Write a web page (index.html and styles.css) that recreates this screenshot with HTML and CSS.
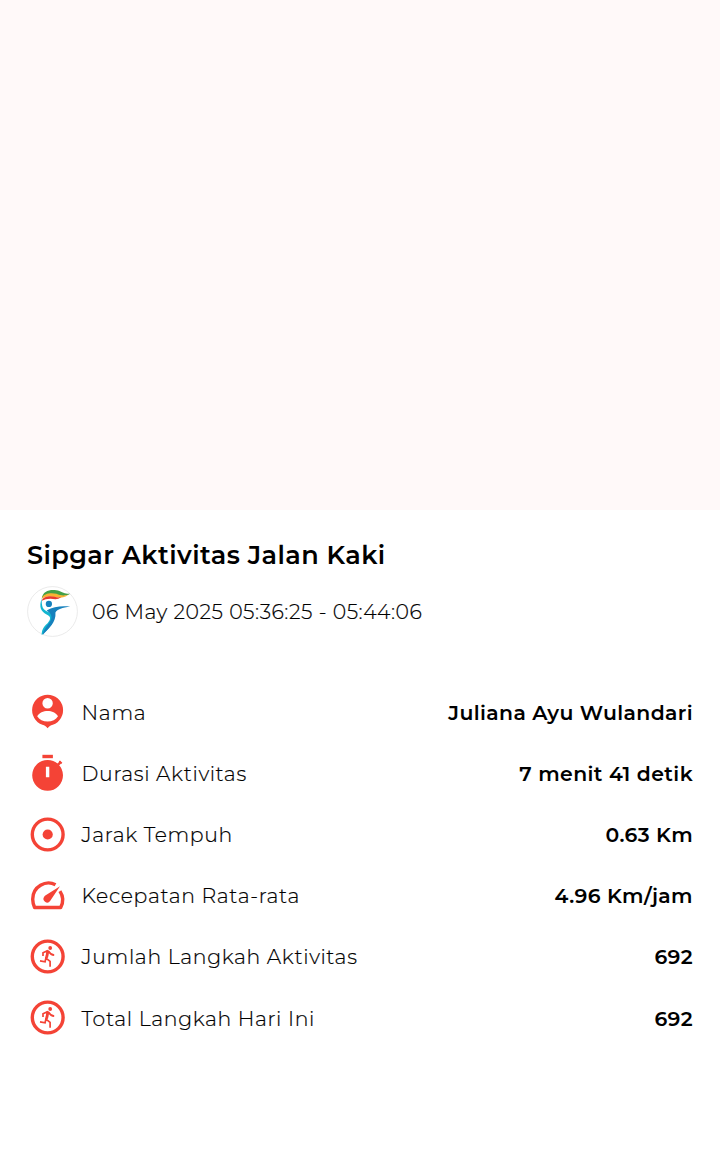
FILE: index.html
```html
<!DOCTYPE html>
<html lang="id">
<head>
<meta charset="utf-8">
<title>Sipgar Aktivitas Jalan Kaki</title>
<link rel="stylesheet" href="styles.css">
</head>
<body>
<div class="map"></div>
<main class="sheet">
  <h1 class="title">Sipgar Aktivitas Jalan Kaki</h1>
  <div class="meta">
    <svg class="avatar" viewBox="0 0 52 52">
      <circle cx="26" cy="26" r="25.4" fill="#fff" stroke="#e0e0e0" stroke-width=".7"/>
      <path d="M15 13C16 3 27 3 33 5c4 2 7 3 11 3-6 4-12 1-17 1-6 0-9 1-12 4z" fill="#43a047"/>
      <path d="M15 13c2-6 10-6 15-5 4 2 8 2 12 1-6 5-13 2-17 2-4-1-7 0-10 2z" fill="#f9b233"/>
      <path d="M15 15c2-5 9-5 13-4 3 1 5 1 7 0-4 4-8 2-11 2-4 0-6 1-9 2z" fill="#e5392f"/>
      <path d="M15 13c-3 8-1 13 5 16 4 2 5 4 1 9-5 4-6 8-6 12 8-7 13-13 12-19-1-5-9-4-11-9-1-3-1-6-1-9z" fill="#12b5cf"/>
      <path d="M20 25c7-4 15-5 24-4-8 1-13 3-15 6 1 10-7 16-13 23 1-8 9-13 9-18 0-3-2-5-5-7z" fill="#1681bd"/>
      <circle cx="22.300" cy="18.300" r="3.200" fill="#1681bd"/>
    </svg>
    <span class="date">06 May 2025 05:36:25 - 05:44:06</span>
  </div>
  <section class="stats">
    <div class="row">
      <svg class="icon" viewBox="0 0 41 41"><path fill-rule="evenodd" d="M20.600 2.700a15.500 15.500 0 0 1 5.200 30.100c-2.300.8-3.700 1.500-5.200 3.500-1.500-2-2.900-2.700-5.200-3.500A15.500 15.500 0 0 1 20.600 2.700zM20.600 6a5.200 5.200 0 1 0 0 10.400 5.200 5.200 0 0 0 0-10.400zM10.200 24.300c2 3.500 6 5.200 10.400 5.200s8.400-1.700 10.400-5.200c-2-3.700-6.200-5.300-10.400-5.300s-8.400 1.600-10.400 5.300z"/></svg>
      <span class="label">Nama</span><span class="value">Juliana Ayu Wulandari</span>
    </div>
    <div class="row">
      <svg class="icon" viewBox="0 0 41 41"><path d="M15.400 1.800h10.500v3.400H15.400z"/><path d="M28.500 12.500l4.500-4.500 1.800 1.800-4.500 4.500z"/><path fill-rule="evenodd" d="M20.600 6.900a15.400 15.400 0 1 0 0 30.800 15.400 15.400 0 0 0 0-30.800zM18.900 13.800v10.400h3.400V13.800z"/><path d="M31.800 8.600l1.200-1.200 2.300 2.300-1.200 1.200z"/></svg>
      <span class="label">Durasi Aktivitas</span><span class="value">7 menit 41 detik</span>
    </div>
    <div class="row">
      <svg class="icon" viewBox="0 0 41 41"><circle class="ring" cx="20.700" cy="20.500" r="15.400"/><circle cx="20.700" cy="20.500" r="5.100"/></svg>
      <span class="label">Jarak Tempuh</span><span class="value">0.63 Km</span>
    </div>
    <div class="row">
      <svg class="icon" viewBox="0 0 41 41"><path class="line" d="M28.500 9.800C19 4.500 5.700 11.500 5.700 24.200c0 3 .7 5.400 1.900 8.300h26.100c2.900-5.700 2.600-11.400-.8-16.400"/><path d="M33 11.300L23.100 26a3.600 3.600 0 0 1-5.800-4.400c.4-.6 1-1 1.400-1.300z"/></svg>
      <span class="label">Kecepatan Rata-rata</span><span class="value">4.96 Km/jam</span>
    </div>
    <div class="row">
      <svg class="icon" viewBox="0 0 41 41"><circle class="ring" cx="20.700" cy="20.500" r="15.400"/><circle cx="23.200" cy="12" r="1.900"/><path class="run" d="M16 19.900v-3.200l4.500-1.900 1.500.8c1.200 2.300 2.800 3.400 5.200 3.600M20.400 15.200l-1.400 6.900 4.100 3.300v5.400M18.900 21.900l-.8 3.900-5.100-1"/><path d="M19.600 14.300l2.700 1.200-1.300 6.200-2.500.7z"/></svg>
      <span class="label">Jumlah Langkah Aktivitas</span><span class="value">692</span>
    </div>
    <div class="row total">
      <svg class="icon" viewBox="0 0 41 41"><circle class="ring" cx="20.700" cy="20.500" r="15.400"/><circle cx="23.200" cy="12" r="1.900"/><path class="run" d="M16 19.900v-3.200l4.500-1.900 1.500.8c1.200 2.300 2.800 3.400 5.200 3.600M20.400 15.200l-1.400 6.900 4.100 3.300v5.400M18.900 21.900l-.8 3.900-5.100-1"/><path d="M19.600 14.300l2.700 1.200-1.300 6.200-2.500.7z"/></svg>
      <span class="label">Total Langkah Hari Ini</span><span class="value">692</span>
    </div>
  </section>
</main>
</body>
</html>
```
FILE: styles.css
```css
* { box-sizing: border-box; }
body {
  margin: 0;
  height: 1152px;
  background: #fff;
  color: #000;
  font-family: Montserrat, Inter, sans-serif;
  overflow: hidden;
}
.map { height: 510px; background: #fff9f9; }
.sheet { padding: 29px 27px 0; }
.title { margin: 0; font-size: 25.500px; line-height: 32px; font-weight: 600; letter-spacing: .43px; }
.meta { display: flex; align-items: center; gap: 14px; height: 52px; margin-top: 14px; }
.avatar { width: 51px; height: 51px; flex: none; }
.date { padding-top: 1px; font-size: 20.400px; font-weight: 300; letter-spacing: .53px; }
.stats { margin-top: 45px; }
.row { display: flex; align-items: center; height: 61px; }
.icon { width: 41px; height: 41px; flex: none; fill: #f44336; }
.ring, .line { fill: none; stroke: #f44336; stroke-width: 3.400; stroke-linejoin: round; }
.run { fill: none; stroke: #f44336; stroke-width: 1.700; }
.label { margin-left: 13.600px; font-size: 20.400px; font-weight: 300; letter-spacing: .65px; white-space: nowrap; -webkit-text-stroke: .2px #000; }
.date { -webkit-text-stroke: .2px #000; }
.value { margin-left: auto; font-size: 20.400px; font-weight: 600; letter-spacing: .4px; white-space: nowrap; }
.total .label, .total .value { padding-top: 2px; }
```
